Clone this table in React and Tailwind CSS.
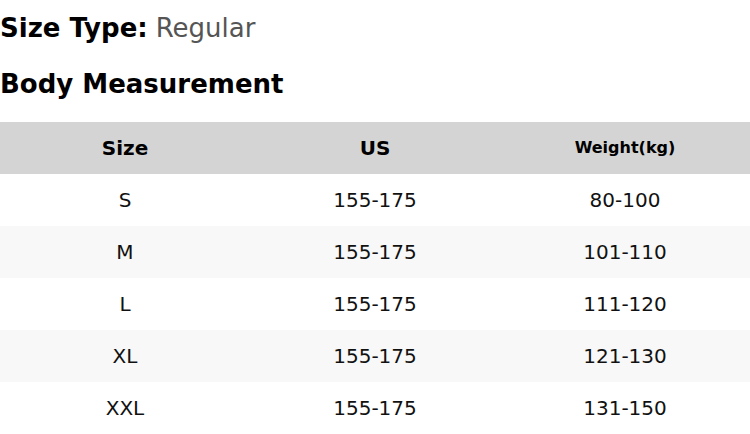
import React from 'react';

const rows = [
    ['S', '155-175', '80-100'],
    ['M', '155-175', '101-110'],
    ['L', '155-175', '111-120'],
    ['XL', '155-175', '121-130'],
    ['XXL', '155-175', '131-150'],
];

function App() {
    return (
        <div className="w-[750px] h-[434px] overflow-hidden bg-white text-black font-['DejaVu_Sans',sans-serif]">
            {/* Headings */}
            <div className="h-[56px] flex items-center text-[26px] leading-none">
                <span className="font-bold">Size Type:</span>
                <span className="ml-2 text-[#555]">Regular</span>
            </div>
            <div className="h-[56px] flex items-center text-[26px] font-bold leading-none">
                Body Measurement
            </div>
            <div className="h-[10px]"></div>

            {/* Table */}
            <table className="w-full table-fixed border-collapse">
                <thead>
                    <tr className="h-[52px] bg-[#d4d4d4]">
                        <th className="text-[20px] font-bold">Size</th>
                        <th className="text-[20px] font-bold">US</th>
                        <th className="text-[16px] font-bold">Weight(kg)</th>
                    </tr>
                </thead>
                <tbody>
                    {rows.map((r, i) => (
                        <tr key={r[0]} className={i % 2 === 1 ? 'h-[52px] bg-[#f8f8f8]' : 'h-[52px] bg-white'}>
                            {r.map((c, j) => (
                                <td key={j} className="text-center text-[20px] font-normal text-[#111]">{c}</td>
                            ))}
                        </tr>
                    ))}
                </tbody>
            </table>
        </div>
    );
}

export default App;
